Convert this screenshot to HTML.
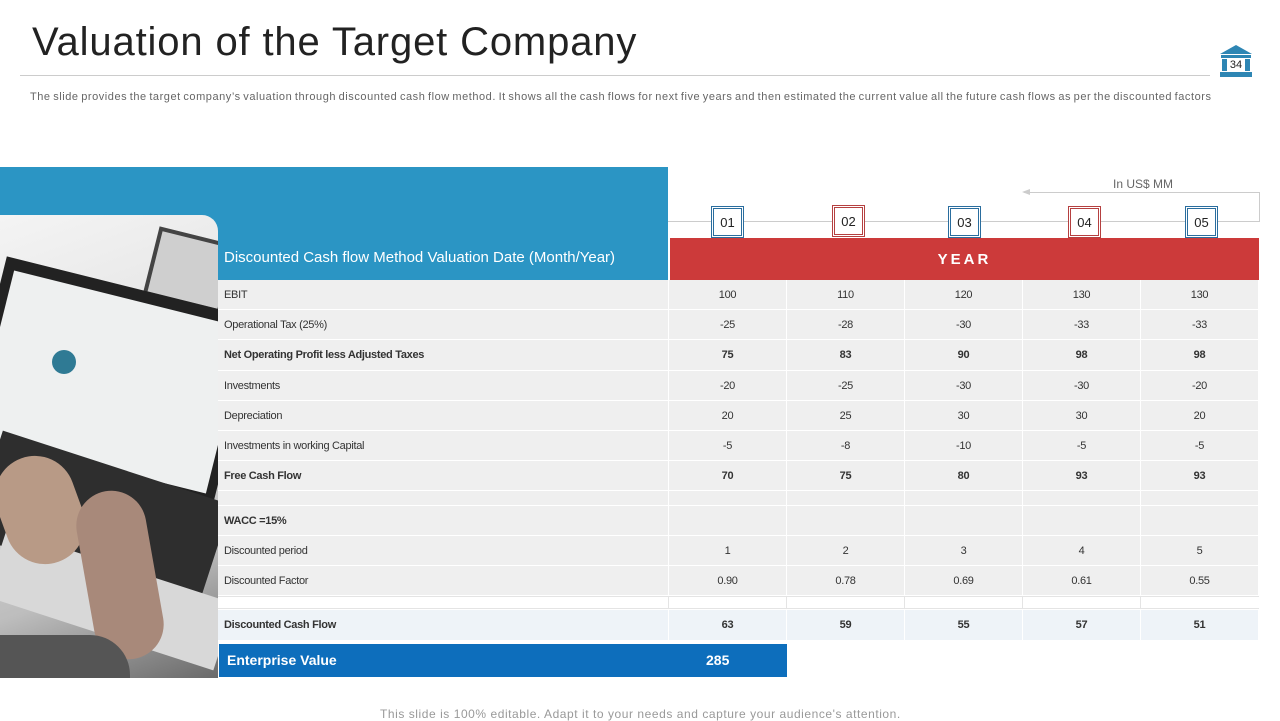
<!DOCTYPE html>
<html><head><meta charset="utf-8"><style>
*{margin:0;padding:0;box-sizing:border-box}
body{width:1280px;height:720px;background:#fff;position:relative;overflow:hidden;font-family:"Liberation Sans",sans-serif}
.a{position:absolute}
.row{position:absolute;left:218px;width:1041px;display:flex;background:#efefef}
.row div{border-right:1px solid #fff;display:flex;align-items:center;justify-content:center;font-size:11px;color:#333;letter-spacing:-0.3px}
.row div:first-child{width:451px;justify-content:flex-start;padding-left:6px}
.row div:not(:first-child){width:118px}
.b div{font-weight:bold}
.yb{position:absolute;top:206px;width:33px;height:32px;background:#fff;border:3px double;font-size:13px;display:flex;align-items:center;justify-content:center;color:#222}
</style></head><body>
<div class="a" style="left:32px;top:20px;font-size:40px;color:#222;letter-spacing:0.85px">Valuation of the Target Company</div>
<div class="a" style="left:20px;top:75px;width:1190px;height:1px;background:#ccc"></div>
<svg class="a" style="left:1219px;top:44px" width="34" height="34" viewBox="0 0 34 34">
<polygon points="17,1 1,10 33,10" fill="#2e86b4"/><rect x="2" y="11" width="30" height="3" fill="#2e86b4"/>
<rect x="3" y="15" width="5" height="12" fill="#2e86b4"/><rect x="26" y="15" width="5" height="12" fill="#2e86b4"/>
<rect x="1" y="28" width="32" height="5" fill="#2e86b4"/>
<text x="17" y="24" font-size="11" text-anchor="middle" fill="#222" font-family="Liberation Sans">34</text></svg>
<div class="a" style="left:30px;top:91px;font-size:11px;color:#666;letter-spacing:0.55px;word-spacing:-1px;white-space:nowrap">The slide provides the target company’s valuation through discounted cash flow method. It shows all the cash flows for next five years and then estimated the current value all the future cash flows as per the discounted factors</div>

<div class="a" style="left:0;top:167px;width:668px;height:113px;background:#2b95c4"></div>
<div class="a" style="left:224px;top:249px;font-size:15px;color:#fff">Discounted Cash flow Method Valuation Date (Month/Year)</div>
<div class="a" style="left:0;top:215px;width:218px;height:463px;border-top-right-radius:16px;overflow:hidden;background:linear-gradient(160deg,#f4f4f4 0%,#e6e6e6 30%,#d5d5d5 55%,#bdbdbd 75%,#6a6a6a 100%)">
<div class="a" style="left:150px;top:20px;width:80px;height:70px;background:#cfcfcf;border:4px solid #444;transform:rotate(14deg)"></div>
<div class="a" style="left:-20px;top:70px;width:260px;height:190px;background:#222;transform:rotate(14deg)"></div>
<div class="a" style="left:-10px;top:82px;width:240px;height:170px;background:#eef0f0;transform:rotate(14deg)"></div>
<div class="a" style="left:52px;top:135px;width:24px;height:24px;border-radius:50%;background:#2f7a94"></div>
<div class="a" style="left:-20px;top:250px;width:240px;height:110px;background:#2e2e2e;transform:rotate(18deg)"></div>
<div class="a" style="left:-10px;top:350px;width:240px;height:70px;background:#d8d8d8;transform:rotate(18deg)"></div>
<div class="a" style="left:0;top:240px;width:80px;height:110px;background:#b89a86;border-radius:40px;transform:rotate(-20deg)"></div>
<div class="a" style="left:85px;top:275px;width:70px;height:170px;background:#a8897a;border-radius:35px;transform:rotate(-10deg)"></div>
<div class="a" style="left:0;top:420px;width:130px;height:50px;background:#555;border-top-right-radius:40px"></div>
</div>

<div class="a" style="left:668px;top:221px;width:592px;height:1px;background:#ccc"></div>
<div class="a" style="left:1024px;top:192px;width:235px;height:1px;background:#ccc"></div>
<div class="a" style="left:1022px;top:189px;width:0;height:0;border-top:3px solid transparent;border-bottom:3px solid transparent;border-right:8px solid #ccc"></div>
<div class="a" style="left:1259px;top:192px;width:1px;height:30px;background:#ccc"></div>
<div class="a" style="left:1113px;top:177px;font-size:12px;color:#666">In US$ MM</div>
<div class="yb" style="left:711px;border-color:#2a6d9e">01</div>
<div class="yb" style="left:832px;border-color:#b54040;top:205px">02</div>
<div class="yb" style="left:948px;border-color:#2a6d9e">03</div>
<div class="yb" style="left:1068px;border-color:#b54040">04</div>
<div class="yb" style="left:1185px;border-color:#2a6d9e">05</div>
<div class="a" style="left:670px;top:238px;width:589px;height:42px;background:#cc3a3a;color:#fff;font-weight:bold;font-size:15px;letter-spacing:3px;display:flex;align-items:center;justify-content:center">YEAR</div>

<div class="row" style="top:280px;height:29px"><div>EBIT</div><div>100</div><div>110</div><div>120</div><div>130</div><div>130</div></div>
<div class="row" style="top:310px;height:29px"><div>Operational Tax (25%)</div><div>-25</div><div>-28</div><div>-30</div><div>-33</div><div>-33</div></div>
<div class="row b" style="top:340px;height:30px"><div>Net Operating Profit less Adjusted Taxes</div><div>75</div><div>83</div><div>90</div><div>98</div><div>98</div></div>
<div class="row" style="top:371px;height:29px"><div>Investments</div><div>-20</div><div>-25</div><div>-30</div><div>-30</div><div>-20</div></div>
<div class="row" style="top:401px;height:29px"><div>Depreciation</div><div>20</div><div>25</div><div>30</div><div>30</div><div>20</div></div>
<div class="row" style="top:431px;height:29px"><div>Investments in working Capital</div><div>-5</div><div>-8</div><div>-10</div><div>-5</div><div>-5</div></div>
<div class="row b" style="top:461px;height:29px"><div>Free Cash Flow</div><div>70</div><div>75</div><div>80</div><div>93</div><div>93</div></div>
<div class="row" style="top:491px;height:14px"><div></div><div></div><div></div><div></div><div></div><div></div></div>
<div class="row b" style="top:506px;height:29px"><div>WACC =15%</div><div></div><div></div><div></div><div></div><div></div></div>
<div class="row" style="top:536px;height:29px"><div>Discounted period</div><div>1</div><div>2</div><div>3</div><div>4</div><div>5</div></div>
<div class="row" style="top:566px;height:29px"><div>Discounted Factor</div><div>0.90</div><div>0.78</div><div>0.69</div><div>0.61</div><div>0.55</div></div>
<div class="row" style="top:596px;height:13px;background:#fff;border-top:1px solid #e4e4e4;border-bottom:1px solid #e4e4e4"><div style="border-right:1px solid #e4e4e4"></div><div style="border-right:1px solid #e4e4e4"></div><div style="border-right:1px solid #e4e4e4"></div><div style="border-right:1px solid #e4e4e4"></div><div style="border-right:1px solid #e4e4e4"></div><div></div></div>
<div class="row b" style="top:610px;height:30px;background:#eef3f8"><div>Discounted Cash Flow</div><div>63</div><div>59</div><div>55</div><div>57</div><div>51</div></div>
<div class="a" style="left:219px;top:644px;width:568px;height:33px;background:#0d6ebc;color:#fff;font-weight:bold;font-size:14px">
<span class="a" style="left:8px;top:8px">Enterprise Value</span><span class="a" style="left:487px;top:8px">285</span></div>
<div class="a" style="left:380px;top:707px;font-size:12px;color:#999;letter-spacing:0.55px">This slide is 100% editable. Adapt it to your needs and capture your audience's attention.</div>
</body></html>
